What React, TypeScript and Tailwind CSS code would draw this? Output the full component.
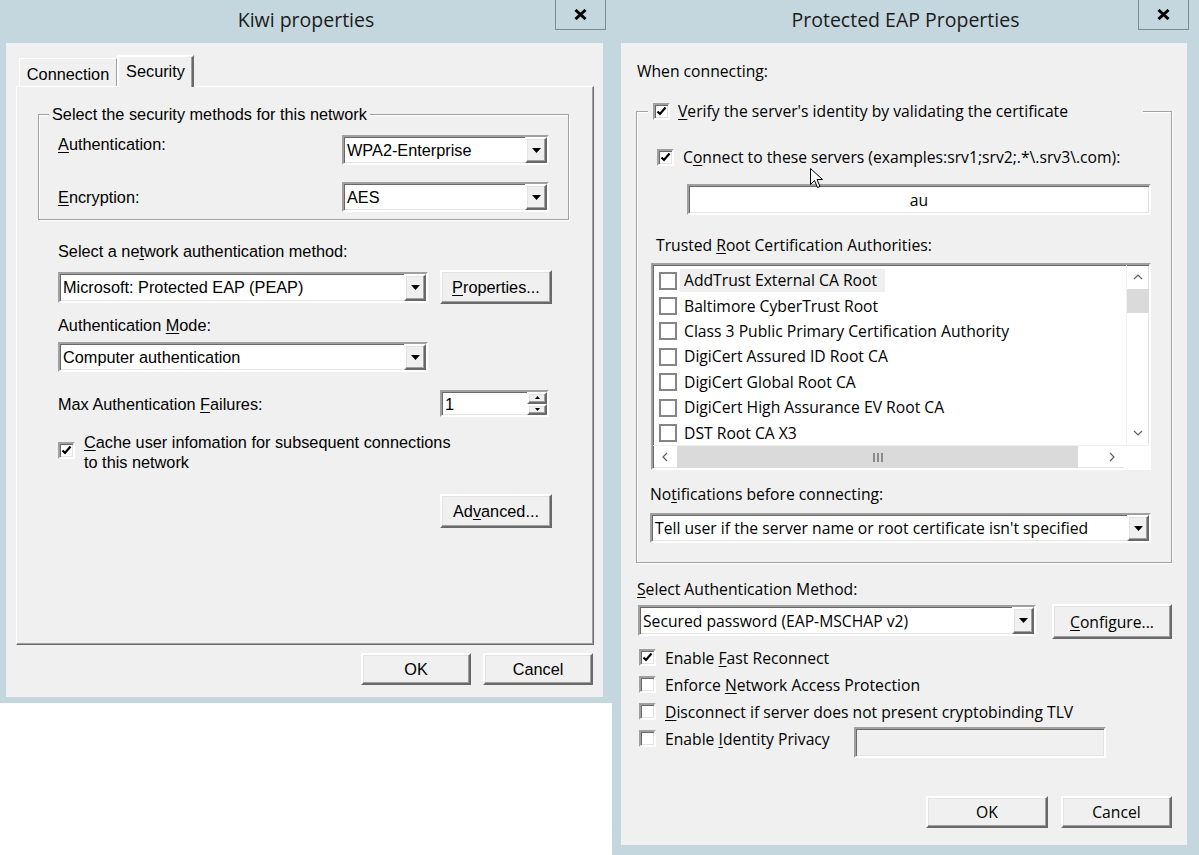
import React from 'react';

// classic 3D borders, reused everywhere
const sunken =
  'border-2 border-t-[#a0a0a0] border-l-[#a0a0a0] border-b-white border-r-white shadow-[inset_1px_1px_0_#696969,inset_-1px_-1px_0_#e3e3e3]';
const raised =
  'border-2 border-t-white border-l-white border-b-[#696969] border-r-[#696969] shadow-[inset_-1px_-1px_0_#a0a0a0,inset_1px_1px_0_#e3e3e3]';
const etched = 'border border-[#a0a0a0] shadow-[inset_1px_1px_0_#ffffff,1px_1px_0_#ffffff]';

const Key = ({ children }: { children: React.ReactNode }) => (
  <span className="underline decoration-1 underline-offset-[2px]">{children}</span>
);

const TitleBar: React.FC<{ title: string; closeClass: string }> = ({ title, closeClass }) => (
  <div className="relative flex h-[43px] shrink-0 items-center justify-center pb-[3px]">
    <span className="font-['Open_Sans',sans-serif] text-[19.5px] text-[#1b1b1b]">{title}</span>
    <div
      className={`absolute top-0 flex h-[30px] w-[51px] items-center justify-center border border-t-0 border-[#7d8b90] bg-[#c4d7de] ${closeClass}`}
    >
      <svg width="13" height="11" viewBox="0 0 13 11">
        <path d="M1.5 1l10 9M11.5 1l-10 9" stroke="#000" strokeWidth="3" />
      </svg>
    </div>
  </div>
);

const DropArrow = () => (
  <div className={`flex w-[22px] shrink-0 items-center justify-center bg-[#f0f0f0] ${raised}`}>
    <svg width="9" height="5" viewBox="0 0 9 5">
      <path d="M0 0h9L4.5 5z" fill="#000" />
    </svg>
  </div>
);

const Combo: React.FC<{ value: string; className: string }> = ({ value, className }) => (
  <div className={`flex shrink-0 items-stretch bg-white ${sunken} ${className}`}>
    <div className="flex flex-1 items-center overflow-hidden whitespace-nowrap pl-[3px]">{value}</div>
    <DropArrow />
  </div>
);

const Btn: React.FC<{ children: React.ReactNode; className: string }> = ({ children, className }) => (
  <button className={`flex shrink-0 items-center justify-center bg-[#f0f0f0] ${raised} ${className}`}>{children}</button>
);

const Check: React.FC<{ checked?: boolean }> = ({ checked }) => (
  <span className={`flex h-[17px] w-[17px] shrink-0 items-center justify-center bg-white ${sunken}`}>
    {checked && (
      <svg width="11" height="11" viewBox="0 0 11 11">
        <path d="M1.5 5.5l2.5 2.5 5.5-6.5" stroke="#000" strokeWidth="2.2" fill="none" />
      </svg>
    )}
  </span>
);

const Chevron: React.FC<{ d: string }> = ({ d }) => (
  <svg width="12" height="12" viewBox="0 0 12 12">
    <path d={d} stroke="#606060" strokeWidth="1.2" fill="none" />
  </svg>
);

function KiwiWindow() {
  return (
    <div className="flex h-[703px] w-[612px] shrink-0 flex-col bg-[#c4d7de] font-['Liberation_Sans',Arial,sans-serif] text-[16.3px] leading-[20px]">
      <TitleBar title="Kiwi properties" closeClass="right-[6px]" />
      <div className="flex-1 pb-[6px] pl-[6px] pr-[9px]">
        <div className="flex h-full flex-col bg-[#f0f0f0]">
          {/* tabs */}
          <div className="ml-[13px] mt-[12px] flex items-end">
            <div className="flex h-[28px] w-[98px] items-center justify-center border border-b-0 border-t-white border-l-white border-r-[#a0a0a0] pt-[2px]">
              Connection
            </div>
            <div className="relative z-10 -mb-px flex h-[32px] w-[77px] items-start justify-center border-2 border-b-0 border-t-white border-l-white border-r-[#696969] bg-[#f0f0f0] pt-[4px] shadow-[inset_-1px_0_0_#a0a0a0]">
              Security
            </div>
          </div>

          {/* tab panel */}
          <div className="ml-[10px] flex h-[559px] w-[578px] flex-col border border-t-white border-l-white border-b-[#696969] border-r-[#696969] shadow-[inset_-1px_-1px_0_#a0a0a0]">
            <div className={`relative ml-[21px] mt-[27px] h-[106px] w-[531px] shrink-0 ${etched}`}>
              <span className="absolute -top-[11px] left-[10px] bg-[#f0f0f0] px-[3px]">
                Select the security methods for this network
              </span>
              <div className="ml-[19px] mr-[19px] mt-[20px] flex items-start justify-between">
                <span className="mt-[-1px]">
                  <Key>A</Key>uthentication:
                </span>
                <Combo value="WPA2-Enterprise" className="h-[30px] w-[207px]" />
              </div>
              <div className="ml-[19px] mr-[19px] mt-[17px] flex items-center justify-between">
                <span>
                  <Key>E</Key>ncryption:
                </span>
                <Combo value="AES" className="h-[30px] w-[207px]" />
              </div>
            </div>

            <div className="ml-[41px] mt-[21px]">
              Select a ne<Key>t</Key>work authentication method:
            </div>
            <div className="ml-[41px] mt-[9px] flex items-center gap-[12px]">
              <Combo value="Microsoft: Protected EAP (PEAP)" className="h-[31px] w-[370px]" />
              <Btn className="h-[34px] w-[112px]">
                <Key>P</Key>roperties...
              </Btn>
            </div>
            <div className="ml-[41px] mt-[11px]">
              Authentication <Key>M</Key>ode:
            </div>
            <div className="ml-[41px] mt-[7px]">
              <Combo value="Computer authentication" className="h-[30px] w-[370px]" />
            </div>
            <div className="ml-[41px] mt-[18px] flex h-[27px] items-center">
              <span className="w-[382px]">
                Max Authentication <Key>F</Key>ailures:
              </span>
              <div className={`flex h-[27px] w-[109px] items-stretch bg-white ${sunken}`}>
                <span className="flex flex-1 items-center pl-[3px]">1</span>
                <div className="flex w-[20px] flex-col bg-[#f0f0f0]">
                  <div className={`flex flex-1 items-center justify-center ${raised}`}>
                    <svg width="5" height="3" viewBox="0 0 5 3">
                      <path d="M0 3h5L2.5 0z" fill="#000" />
                    </svg>
                  </div>
                  <div className={`flex flex-1 items-center justify-center ${raised}`}>
                    <svg width="5" height="3" viewBox="0 0 5 3">
                      <path d="M0 0h5L2.5 3z" fill="#000" />
                    </svg>
                  </div>
                </div>
              </div>
            </div>
            <div className="ml-[41px] mt-[15px] flex items-start gap-[9px]">
              <div className="mt-[10px]">
                <Check checked />
              </div>
              <div>
                <div>
                  <Key>C</Key>ache user infomation for subsequent connections
                </div>
                <div>to this network</div>
              </div>
            </div>
            <div className="ml-[423px] mt-[22px]">
              <Btn className="h-[34px] w-[112px]">
                Ad<Key>v</Key>anced...
              </Btn>
            </div>
          </div>

          <div className="mr-[10px] mt-[8px] flex justify-end gap-[12px]">
            <Btn className="h-[32px] w-[110px]">OK</Btn>
            <Btn className="h-[32px] w-[110px]">Cancel</Btn>
          </div>
        </div>
      </div>
    </div>
  );
}

const certs = [
  'AddTrust External CA Root',
  'Baltimore CyberTrust Root',
  'Class 3 Public Primary Certification Authority',
  'DigiCert Assured ID Root CA',
  'DigiCert Global Root CA',
  'DigiCert High Assurance EV Root CA',
  'DST Root CA X3',
];

function CertList() {
  return (
    <div className={`ml-[14px] mt-[8px] flex h-[207px] w-[500px] shrink-0 flex-col bg-white ${sunken}`}>
      <div className="flex h-[180px]">
        <div className="flex-1 overflow-hidden pt-[3px]">
          {certs.map((name, i) => (
            <div key={name} className="flex h-[25.4px] items-center pl-[6px]">
              <span className="h-[18px] w-[18px] shrink-0 border-2 border-[#858585] bg-white" />
              <span className={`ml-[3px] pl-[4px] pr-[8px] leading-[23px] ${i === 0 ? 'bg-[#efefef]' : ''}`}>{name}</span>
            </div>
          ))}
        </div>
        <div className="flex w-[23px] flex-col border-l border-[#f0f0f0]">
          <div className="flex h-[24px] items-center justify-center">
            <Chevron d="M2 8l4-4 4 4" />
          </div>
          <div className="h-[24px] bg-[#dadada]" />
          <div className="flex-1" />
          <div className="flex h-[24px] items-center justify-center">
            <Chevron d="M2 4l4 4 4-4" />
          </div>
        </div>
      </div>
      <div className="flex h-[23px] border-t border-[#f0f0f0]">
        <div className="flex w-[24px] items-center justify-center">
          <Chevron d="M8 2L4 6l4 4" />
        </div>
        <div className="flex w-[401px] items-center justify-center bg-[#dadada]">
          <svg width="10" height="9" viewBox="0 0 10 9">
            <path d="M1 0v9M5 0v9M9 0v9" stroke="#606060" strokeWidth="1.3" />
          </svg>
        </div>
        <div className="w-[22px]" />
        <div className="flex w-[24px] items-center justify-center">
          <Chevron d="M4 2l4 4-4 4" />
        </div>
        <div className="flex-1 bg-white" />
      </div>
    </div>
  );
}

function PeapWindow() {
  return (
    <div className="flex h-[855px] w-[587px] shrink-0 flex-col bg-[#c4d7de] font-['Open_Sans',sans-serif] text-[15.7px] leading-[20px]">
      <TitleBar title="Protected EAP Properties" closeClass="right-[10px]" />
      <div className="flex-1 pb-[10px] pl-[9px] pr-[12px]">
        <div className="flex h-full flex-col bg-[#f0f0f0]">
          <div className="ml-[16px] mt-[18px]">When connecting:</div>

          <div className={`relative ml-[15px] mt-[30px] flex h-[452px] w-[536px] shrink-0 flex-col ${etched}`}>
            <div className="absolute -top-[11px] left-[11px] flex h-[20px] w-[495px] items-center gap-[8px] bg-[#f0f0f0] pl-[5px]">
              <Check checked />
              <span>
                <Key>V</Key>erify the server's identity by validating the certificate
              </span>
            </div>

            <div className="ml-[20px] mt-[35px] flex h-[20px] items-center gap-[9px]">
              <Check checked />
              <span>
                C<Key>o</Key>nnect to these servers (examples:srv1;srv2;.*\.srv3\.com):
              </span>
            </div>
            <div className={`ml-[50px] mt-[17px] flex h-[31px] w-[464px] shrink-0 items-center justify-center bg-white ${sunken}`}>
              au
            </div>
            <div className="ml-[19px] mt-[20px]">
              Trusted <Key>R</Key>oot Certification Authorities:
            </div>
            <CertList />
            <div className="ml-[13px] mt-[14px]">
              No<Key>t</Key>ifications before connecting:
            </div>
            <div className="ml-[13px] mt-[9px]">
              <Combo value="Tell user if the server name or root certificate isn't specified" className="h-[30px] w-[501px]" />
            </div>
          </div>

          <div className="ml-[16px] mt-[16px]">
            <Key>S</Key>elect Authentication Method:
          </div>
          <div className="ml-[17px] mt-[5px] flex items-start gap-[16px]">
            <Combo value="Secured password (EAP-MSCHAP v2)" className="mt-[1px] h-[31px] w-[398px]" />
            <Btn className="h-[35px] w-[120px]">
              <Key>C</Key>onfigure...
            </Btn>
          </div>

          <div className="ml-[18px] mt-[5px] flex flex-col">
            <div className="flex h-[27px] items-center gap-[9px]">
              <Check checked />
              <span>
                Enable <Key>F</Key>ast Reconnect
              </span>
            </div>
            <div className="flex h-[27px] items-center gap-[9px]">
              <Check />
              <span>
                Enforce <Key>N</Key>etwork Access Protection
              </span>
            </div>
            <div className="flex h-[27px] items-center gap-[9px]">
              <Check />
              <span>
                <Key>D</Key>isconnect if server does not present cryptobinding TLV
              </span>
            </div>
            <div className="flex items-start">
              <div className="flex h-[27px] w-[215px] items-center gap-[9px]">
                <Check />
                <span>
                  Enable <Key>I</Key>dentity Privacy
                </span>
              </div>
              <div className={`mt-[2px] h-[31px] w-[252px] bg-[#f0f0f0] ${sunken}`} />
            </div>
          </div>

          <div className="mr-[15px] mt-[38px] flex justify-end gap-[13px]">
            <Btn className="h-[32px] w-[122px]">OK</Btn>
            <Btn className="h-[32px] w-[111px]">Cancel</Btn>
          </div>
        </div>
      </div>
    </div>
  );
}

const Cursor = () => (
  <svg className="absolute left-[810px] top-[168px] z-20" width="13" height="21" viewBox="0 0 13 21">
    <path d="M0.5 0.5v16l4-4 3 7 2.5-1-3-7h5.5z" fill="#fff" stroke="#000" strokeWidth="1" />
  </svg>
);

export default function App() {
  return (
    <div className="relative flex h-[855px] w-[1199px] items-start overflow-hidden bg-white text-black">
      <KiwiWindow />
      <PeapWindow />
      <Cursor />
    </div>
  );
}
